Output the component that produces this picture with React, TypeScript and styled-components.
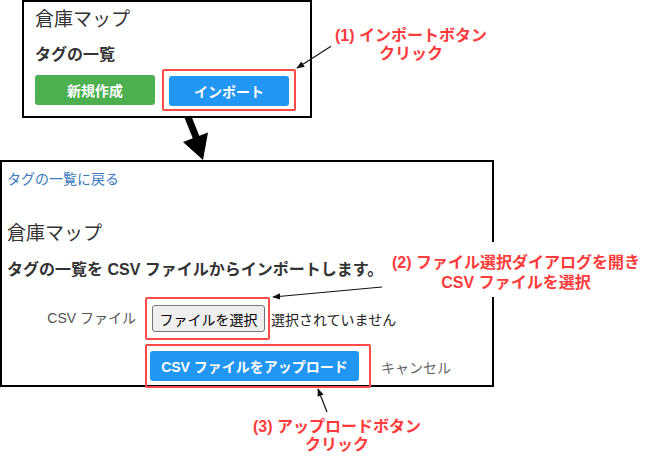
import styled, { createGlobalStyle } from "styled-components";

const GlobalStyle = createGlobalStyle`
  html, body {
    margin: 0;
    padding: 0;
    background: #ffffff;
  }
  body {
    font-family: "Liberation Sans", "Noto Sans CJK JP", sans-serif;
    color: #333333;
  }
`;

const Page = styled.div`
  position: relative;
  width: 653px;
  height: 461px;
  overflow: hidden;
  background: #ffffff;
`;

/* screenshot frames */
const Shot = styled.section<{ $left: number; $top: number; $width: number; $height: number; $pad: string }>`
  box-sizing: border-box;
  margin: ${({ $top, $left }) => `${$top}px 0 0 ${$left}px`};
  width: ${({ $width }) => $width}px;
  height: ${({ $height }) => $height}px;
  border: 2px solid #000000;
  padding: ${({ $pad }) => $pad};
  background: #ffffff;
  display: flex;
  flex-direction: column;
`;

const Title = styled.h1<{ $gap?: number }>`
  margin: ${({ $gap }) => $gap ?? 0}px 0 0;
  font-size: 19px;
  line-height: 23px;
  font-weight: 400;
  color: #333333;
`;

const SubTitle = styled.h2<{ $gap: number }>`
  margin: ${({ $gap }) => $gap}px 0 0;
  font-size: 16px;
  line-height: 20px;
  font-weight: 700;
  color: #333333;
  white-space: nowrap;
`;

const BackLink = styled.a`
  font-size: 14px;
  line-height: 18px;
  color: #3a7bbf;
  text-decoration: none;
`;

const ButtonRow = styled.div<{ $gap: number }>`
  display: flex;
  align-items: center;
  gap: 7px;
  margin-top: ${({ $gap }) => $gap}px;
`;

const FlatButton = styled.button<{ $color: string; $width: number }>`
  width: ${({ $width }) => $width}px;
  height: 30px;
  border: none;
  border-radius: 3px;
  background: ${({ $color }) => $color};
  color: #ffffff;
  font-family: inherit;
  font-size: 14px;
  font-weight: 700;
  padding: 0;
  white-space: nowrap;
`;

/* red annotation outline round a control */
const Highlight = styled.span<{ $pad: string }>`
  display: inline-flex;
  align-items: center;
  border: 2px solid #ff4a4a;
  border-radius: 2px;
  padding: ${({ $pad }) => $pad};
`;

const FormGrid = styled.div`
  display: grid;
  grid-template-columns: 130px auto;
  column-gap: 8px;
  row-gap: 4px;
  align-items: center;
  margin-top: 17px;
`;

const FieldLabel = styled.label`
  text-align: right;
  font-size: 14px;
  color: #555555;
  padding-right: 1px;
  margin-top: -4px;
`;

const FieldControls = styled.div<{ $col?: number }>`
  grid-column: ${({ $col }) => $col ?? "auto"};
  display: flex;
  align-items: center;
`;

const FileButton = styled.button`
  box-sizing: border-box;
  width: 113px;
  height: 27px;
  border: 1px solid #767676;
  border-radius: 3px;
  background: #efefef;
  color: #000000;
  font-family: inherit;
  font-size: 14px;
  padding: 0;
`;

const FileStatus = styled.span`
  font-size: 14px;
  color: #222222;
  margin-left: 1px;
`;

const CancelLink = styled.a`
  font-size: 14px;
  color: #666666;
  margin-left: 10px;
  margin-top: 1px;
`;

/* overlay drawing: arrows */
const Overlay = styled.svg`
  position: absolute;
  left: 0;
  top: 0;
  width: 653px;
  height: 461px;
  pointer-events: none;
`;

const Note = styled.div<{ $left: number; $top: number; $width: number; $lh: number; $pad?: string }>`
  position: absolute;
  left: ${({ $left }) => $left}px;
  top: ${({ $top }) => $top}px;
  width: ${({ $width }) => $width}px;
  padding: ${({ $pad }) => $pad ?? "0"};
  background: #ffffff;
  color: #ff3b3b;
  font-size: 16px;
  font-weight: 700;
  line-height: ${({ $lh }) => $lh}px;
  text-align: center;
  white-space: nowrap;
`;

function ThinArrow({ x1, y1, x2, y2 }: { x1: number; y1: number; x2: number; y2: number }) {
  return (
    <line x1={x1} y1={y1} x2={x2} y2={y2} stroke="#111" strokeWidth={1.2} markerEnd="url(#head)" />
  );
}

export default function App() {
  return (
    <>
      <GlobalStyle />
      <Page>
        <Shot $left={22} $top={0} $width={290} $height={118} $pad="6px 11px 0">
          <Title>倉庫マップ</Title>
          <SubTitle $gap={14}>タグの一覧</SubTitle>
          <ButtonRow $gap={4}>
            <FlatButton $color="#4caf50" $width={120}>新規作成</FlatButton>
            <Highlight $pad="5px 5px 3px">
              <FlatButton $color="#2196f3" $width={120}>インポート</FlatButton>
            </Highlight>
          </ButtonRow>
        </Shot>

        <Shot $left={0} $top={42} $width={494} $height={227} $pad="8px 5px 0">
          <BackLink href="#">タグの一覧に戻る</BackLink>
          <Title $gap={34}>倉庫マップ</Title>
          <SubTitle $gap={15}>タグの一覧を CSV ファイルからインポートします。</SubTitle>
          <FormGrid>
            <FieldLabel>CSV ファイル</FieldLabel>
            <FieldControls>
              <Highlight $pad="6px 3px 6px 5px">
                <FileButton>ファイルを選択</FileButton>
              </Highlight>
              <FileStatus>選択されていません</FileStatus>
            </FieldControls>
            <FieldControls $col={2}>
              <Highlight $pad="5px 10px 5px 3px">
                <FlatButton $color="#2196f3" $width={209}>CSV ファイルをアップロード</FlatButton>
              </Highlight>
              <CancelLink>キャンセル</CancelLink>
            </FieldControls>
          </FormGrid>
        </Shot>

        <Overlay viewBox="0 0 653 461">
          <defs>
            <marker id="head" viewBox="0 0 10 8" refX="9" refY="4" markerWidth="8" markerHeight="7" orient="auto" markerUnits="userSpaceOnUse">
              <path d="M0 0 L10 4 L0 8 Z" fill="#111" />
            </marker>
          </defs>
          <ThinArrow x1={333} y1={45} x2={297} y2={68} />
          <ThinArrow x1={382} y1={287} x2={273} y2={297} />
          <ThinArrow x1={327} y1={412} x2={318} y2={389} />
          <line x1={188} y1={117} x2={198} y2={142} stroke="#000" strokeWidth={7} />
          <polygon points="183,142 208,132.5 203,160" fill="#000" />
        </Overlay>

        <Note $left={331} $top={27} $width={160} $lh={18}>
          (1) インポートボタン
          <br />
          クリック
        </Note>
        <Note $left={390} $top={242} $width={252} $lh={20} $pad="1px 0 4px">
          <span style={{ display: "block", height: 10 }} />
          (2) ファイル選択ダイアログを開き
          <br />
          CSV ファイルを選択
        </Note>
        <Note $left={247} $top={418} $width={180} $lh={18}>
          (3) アップロードボタン
          <br />
          クリック
        </Note>
      </Page>
    </>
  );
}
